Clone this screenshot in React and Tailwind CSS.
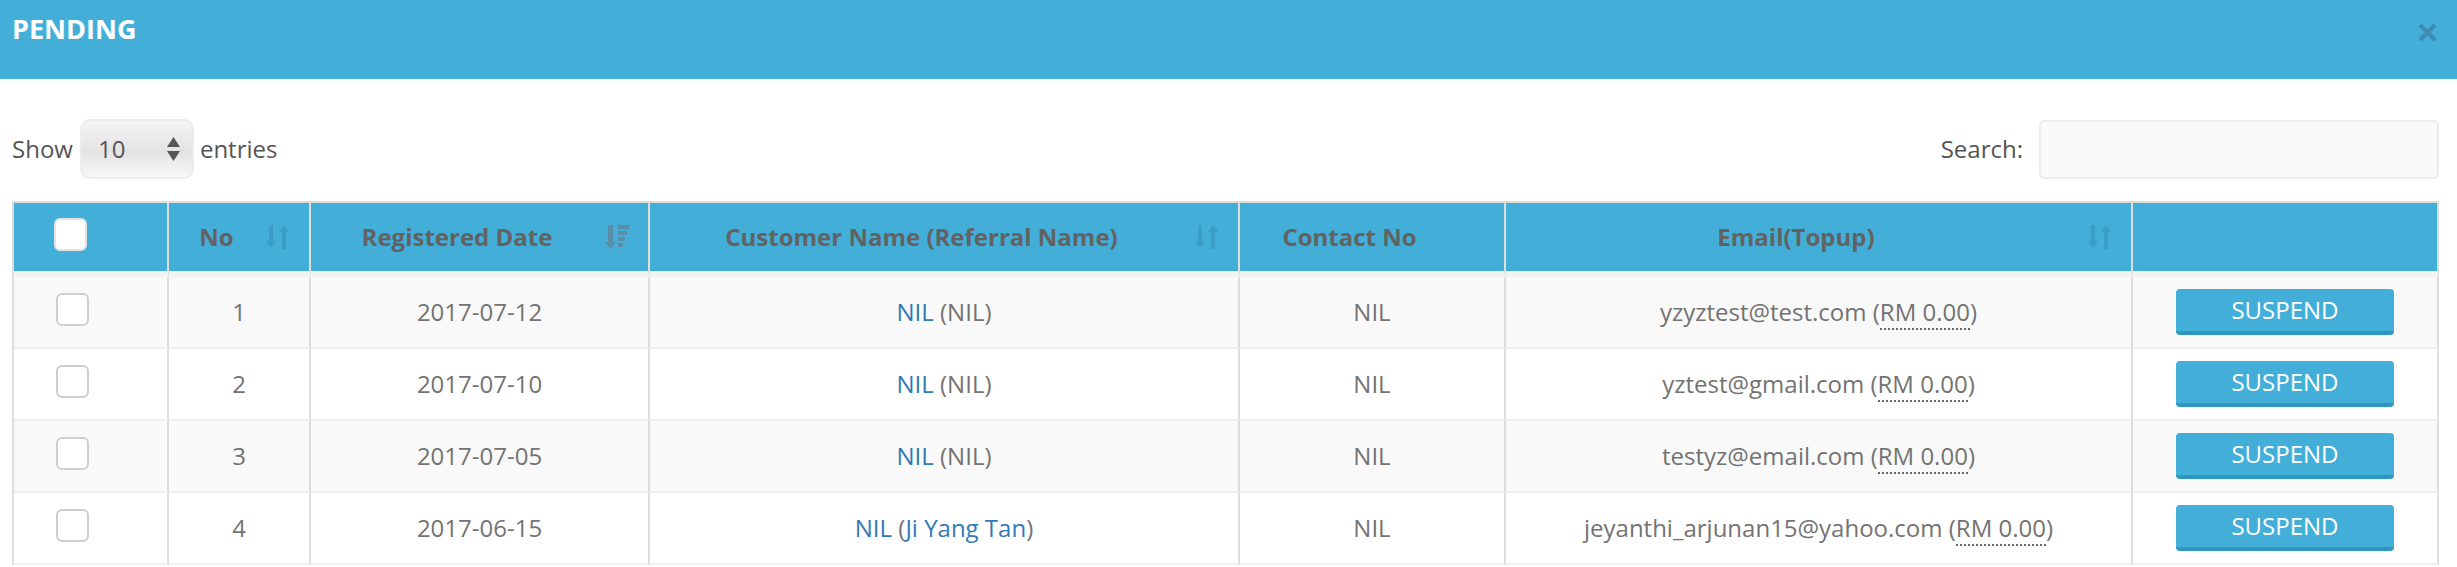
import React from 'react'

const rows = [
  { no: 1, date: '2017-07-12', referral: null, email: 'yzyztest@test.com' },
  { no: 2, date: '2017-07-10', referral: null, email: 'yztest@gmail.com' },
  { no: 3, date: '2017-07-05', referral: null, email: 'testyz@email.com' },
  { no: 4, date: '2017-06-15', referral: 'Ji Yang Tan', email: 'jeyanthi_arjunan15@yahoo.com' },
]

const cols = 'grid grid-cols-[155px_142px_339px_590px_266px_627px_306px]'

function SortBoth() {
  return (
    <svg className="absolute right-[19px] top-1/2 -translate-y-1/2 w-[24px] h-[24px]" viewBox="0 0 24 24" fill="#3a9dc5">
      <rect x="3" y="0" width="4" height="16" />
      <polygon points="0,16 10,16 5,23" />
      <polygon points="13,7 23,7 18,0" />
      <rect x="16" y="7" width="4" height="17" />
    </svg>
  )
}

function SortDesc() {
  return (
    <svg className="absolute right-[19px] top-1/2 -translate-y-1/2 w-[24px] h-[24px]" viewBox="0 0 24 24" fill="#5a8ea6">
      <rect x="3" y="0" width="5" height="17" />
      <polygon points="0,17 11,17 5.5,24" />
      <rect x="13" y="0" width="11" height="4" />
      <rect x="13" y="6" width="9" height="4" />
      <rect x="13" y="12" width="7" height="4" />
      <rect x="13" y="18" width="5" height="4" />
    </svg>
  )
}

function Checkbox({ header }) {
  return (
    <span
      className={`block w-[33px] h-[33px] rounded-[6px] bg-white border-2 ${
        header ? 'border-[#e2e2e2]' : 'border-[#cfcfcf] mb-[5px]'
      }`}
    />
  )
}

function HeadCell({ children, sort }) {
  return (
    <div className="relative h-[74px] border-r-2 border-r-[#dddddd] border-b-[6px] border-b-[#f3f3f3] flex items-center justify-center pr-[45px] font-bold text-[#626262]">
      {children}
      {sort === 'both' && <SortBoth />}
      {sort === 'desc' && <SortDesc />}
    </div>
  )
}

function Cell({ children, className = '' }) {
  return (
    <div className={`h-[72px] border-r-2 border-r-[#dddddd] border-b-2 border-b-[#efefef] flex items-center justify-center ${className}`}>
      {children}
    </div>
  )
}

export default function App() {
  return (
    <div className="w-full bg-white font-['Open_Sans',sans-serif] text-[24px] text-[#737373]">
      <div className="h-[79px] bg-[#43afd9] flex items-start justify-between pl-[12px] pr-[20px]">
        <h4 className="pt-[15px] text-[27px] leading-[27px] font-bold text-white">PENDING</h4>
        <button className="mt-[23px]" title="Close">
          <svg className="w-[19px] h-[19px]" viewBox="0 0 19 19" stroke="#3e8cb1" strokeWidth="4.5" strokeLinecap="butt">
            <line x1="2" y1="2" x2="17" y2="17" />
            <line x1="17" y1="2" x2="2" y2="17" />
          </svg>
        </button>
      </div>

      <div className="mt-[40px] h-[60px] flex items-center justify-between pl-[12px] pr-[18px] text-[#555]">
        <div className="flex items-center">
          <span>Show</span>
          <div className="ml-[7px] mr-[6px] w-[114px] h-[60px] rounded-[10px] border-2 border-[#ececec] bg-[linear-gradient(#f4f4f4,#e3e3e3_55%,#f8f8f8)] flex items-center justify-between pl-[16px] pr-[12px]">
            <span className="text-[#555]">10</span>
            <svg className="w-[13px] h-[24px]" viewBox="0 0 13 24" fill="#555">
              <polygon points="6.5,0 13,10 0,10" />
              <polygon points="0,14 13,14 6.5,24" />
            </svg>
          </div>
          <span>entries</span>
        </div>
        <div className="flex items-center gap-[16px]">
          <span>Search:</span>
          <input className="w-[400px] h-[59px] rounded-[5px] border-2 border-[#ededed] bg-[#fafafa] outline-none" />
        </div>
      </div>

      <div className="mt-[22px] ml-[12px] mr-[18px] border-l-2 border-t-2 border-[#dddddd]">
        <div className={`${cols} bg-[#43afd9]`}>
          <div className="h-[74px] border-r-2 border-r-[#dddddd] border-b-[6px] border-b-[#f3f3f3] flex items-center pl-[40px] pb-[6px]">
            <Checkbox header />
          </div>
          <HeadCell sort="both">No</HeadCell>
          <HeadCell sort="desc">Registered Date</HeadCell>
          <HeadCell sort="both">Customer Name (Referral Name)</HeadCell>
          <HeadCell>Contact No</HeadCell>
          <HeadCell sort="both">Email(Topup)</HeadCell>
          <div className="h-[74px] border-r-2 border-r-[#dddddd] border-b-[6px] border-b-[#f3f3f3]" />
        </div>

        {rows.map((row, i) => (
          <div key={row.no} className={`${cols} ${i % 2 === 0 ? 'bg-[#f9f9f9]' : 'bg-white'}`}>
            <Cell className="!justify-start pl-[42px]">
              <Checkbox />
            </Cell>
            <Cell>{row.no}</Cell>
            <Cell>{row.date}</Cell>
            <Cell>
              <span>
                <a href="#" className="text-[#337ab7]">NIL</a>{' '}
                (
                {row.referral ? <a href="#" className="text-[#337ab7]">{row.referral}</a> : 'NIL'}
                )
              </span>
            </Cell>
            <Cell>NIL</Cell>
            <Cell>
              <span>
                {row.email} (<span className="border-b-2 border-dotted border-[#666]">RM 0.00</span>)
              </span>
            </Cell>
            <Cell>
              <button className="w-[218px] h-[46px] rounded-[4px] bg-[#43afd9] border-b-4 border-[#2e97c0] text-white leading-none">
                SUSPEND
              </button>
            </Cell>
          </div>
        ))}
      </div>
    </div>
  )
}
